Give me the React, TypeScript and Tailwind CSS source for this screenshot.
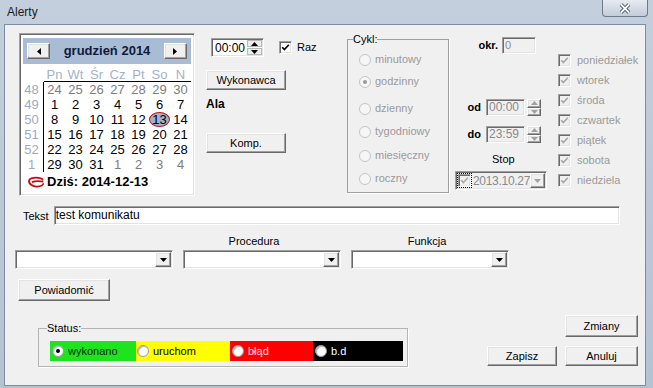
import React from "react";

const sunken =
  "border border-t-[#a0a0a0] border-l-[#a0a0a0] border-r-white border-b-white shadow-[inset_1px_1px_0_#696969,inset_-1px_-1px_0_#e3e3e3]";
const raised =
  "bg-[#f0f0f0] border border-t-white border-l-white border-r-[#696969] border-b-[#696969] shadow-[inset_-1px_-1px_0_#a0a0a0,inset_1px_1px_0_#e3e3e3]";

function Tri({ down = true, color = "#000" }: { down?: boolean; color?: string }) {
  return (
    <svg width="7" height="4" viewBox="0 0 7 4">
      <path d={down ? "M0 0h7L3.5 4z" : "M0 4h7L3.5 0z"} fill={color} />
    </svg>
  );
}

function Side({ left }: { left?: boolean }) {
  return (
    <svg width="4" height="7" viewBox="0 0 4 7">
      <path d={left ? "M4 0v7L0 3.5z" : "M0 0v7L4 3.5z"} fill="#000" />
    </svg>
  );
}

function Button({ label, className }: { label: string; className: string }) {
  return (
    <div className={`${raised} flex items-center justify-center text-[11px] leading-none ${className}`}>
      {label}
    </div>
  );
}

function Combo({ className }: { className: string }) {
  return (
    <div className={`${sunken} bg-white flex justify-end items-center pr-[1px] ${className}`}>
      <div className={`${raised} w-[16px] h-[15px] flex items-center justify-center`}>
        <Tri />
      </div>
    </div>
  );
}

function Check({ disabled }: { disabled?: boolean }) {
  return (
    <div
      className={`w-[13px] h-[13px] shrink-0 flex items-center justify-center ${sunken} ${
        disabled ? "bg-[#f0f0f0]" : "bg-white"
      }`}
    >
      <svg width="9" height="9" viewBox="0 0 9 9">
        <path
          d="M1.2 4.2 L3.4 6.6 L7.8 1.8"
          stroke={disabled ? "#a8a8a8" : "#000"}
          strokeWidth="1.7"
          fill="none"
        />
      </svg>
    </div>
  );
}

function Radio({ on, disabled }: { on?: boolean; disabled?: boolean }) {
  return (
    <div
      className={`w-[12px] h-[12px] shrink-0 rounded-full flex items-center justify-center border ${
        disabled
          ? "bg-[#f6f6f6] border-[#c4c4c4]"
          : "bg-white border-[#9a9a9a] shadow-[inset_1px_1px_1px_#b0b0b0]"
      }`}
    >
      {on && <div className={`w-[4px] h-[4px] rounded-full ${disabled ? "bg-[#9a9a9a]" : "bg-black"}`} />}
    </div>
  );
}

function Spin({ disabled }: { disabled?: boolean }) {
  const c = disabled ? "#a0a0a0" : "#000";
  return (
    <div className="w-[14px] h-[17px] flex flex-col">
      <div className={`${raised} flex-1 flex items-center justify-center`}>
        <Tri down={false} color={c} />
      </div>
      <div className={`${raised} flex-1 flex items-center justify-center`}>
        <Tri color={c} />
      </div>
    </div>
  );
}

const rows: [string, number[], number][] = [
  ["48", [24, 25, 26, 27, 28, 29, 30], 0],
  ["49", [1, 2, 3, 4, 5, 6, 7], 7],
  ["50", [8, 9, 10, 11, 12, 13, 14], 7],
  ["51", [15, 16, 17, 18, 19, 20, 21], 7],
  ["52", [22, 23, 24, 25, 26, 27, 28], 7],
  ["1", [29, 30, 31, 1, 2, 3, 4], 3],
];

function Calendar() {
  return (
    <div className={`ml-[14px] mt-[8px] w-[176px] h-[163px] bg-white ${sunken} flex flex-col`}>
      <div className="mx-[3px] mt-[4px] h-[26px] bg-[#a9bcd6] flex items-center justify-between px-[4px]">
        <div className={`${raised} w-[23px] h-[16px] flex items-center justify-center`}>
          <Side left />
        </div>
        <div className="text-[13px] font-bold text-[#111a3a]">grudzień 2014</div>
        <div className={`${raised} w-[23px] h-[16px] flex items-center justify-center`}>
          <Side />
        </div>
      </div>
      <div className="grid grid-cols-[24px_repeat(7,21px)] text-[13px] leading-[15px]">
        <div className="h-[18px]" />
        {["Pn", "Wt", "Śr", "Cz", "Pt", "So", "N"].map((d) => (
          <div key={d} className="h-[18px] pt-[3px] text-center text-[#a3b3c8] border-b border-black">
            {d}
          </div>
        ))}
        {rows.map(([wk, days, n], ri) => (
          <React.Fragment key={wk}>
            <div className="h-[15px] border-r border-black text-center text-[#9aabc2]">{wk}</div>
            {days.map((d, i) => {
              const muted = ri === 0 ? true : ri === 5 ? i >= n : false;
              const sel = ri === 2 && d === 13;
              return (
                <div key={i} className={`h-[15px] flex justify-center ${muted ? "text-[#7d7d7d]" : "text-black"}`}>
                  {sel ? (
                    <span className="w-[21px] h-[15px] rounded-[50%] border-[1.5px] border-[#cc1010] bg-[#9fb3cd] flex items-center justify-center">
                      13
                    </span>
                  ) : (
                    d
                  )}
                </div>
              );
            })}
          </React.Fragment>
        ))}
      </div>
      <div className="h-[20px] flex items-center pl-[7px] gap-[2px]">
        <svg width="18" height="12" viewBox="0 0 18 12">
          <path
            d="M16 4 C14 1, 4 0.8, 2.3 4 C0.8 7.5, 6 10.8, 10 10.6 C14 10.4, 16.6 9, 16.2 7.2 M5 6.2 C8 5, 12 5, 16.3 5.6"
            stroke="#c80c0c"
            strokeWidth="1.8"
            fill="none"
          />
        </svg>
        <span className="text-[13px] font-bold text-black">Dziś: 2014-12-13</span>
      </div>
    </div>
  );
}

const cykl: [string, number, boolean][] = [
  ["minutowy", 7, false],
  ["godzinny", 9, true],
  ["dzienny", 14, false],
  ["tygodniowy", 10, false],
  ["miesięczny", 11, false],
  ["roczny", 10, false],
];

const dni = ["poniedziałek", "wtorek", "środa", "czwartek", "piątek", "sobota", "niedziela"];

export default function App() {
  return (
    <div className="w-[653px] h-[388px] bg-gradient-to-b from-[#c3cfdc] to-[#b4c3d3] flex flex-col font-['Liberation_Sans',Arial,sans-serif] text-black overflow-hidden">
      <div className="h-[24px] flex items-start justify-between">
        <div className="pl-[7px] pt-[3px] text-[12px] text-[#1a1a1a]">Alerty</div>
        <div className="mr-[5px] w-[46px] h-[17px] rounded-b-[4px] border border-t-0 border-[#6c7a8c] bg-gradient-to-b from-[#e6ebf1] to-[#c3ccd8] flex items-center justify-center">
          <svg width="14" height="11" viewBox="0 0 14 11">
            <path d="M3 1.5 L11 9.5 M11 1.5 L3 9.5" stroke="#3c4655" strokeWidth="3.6" />
            <path d="M3 1.5 L11 9.5 M11 1.5 L3 9.5" stroke="#ffffff" strokeWidth="1.8" />
          </svg>
        </div>
      </div>

      <div className="ml-[4px] w-[642px] h-[362px] border border-[#7d8ca0] bg-[#f0f0f0] flex flex-col text-[11px]">
        {/* top area */}
        <div className="h-[181px] flex items-start">
          <Calendar />

          <div className="ml-[11px] w-[141px] flex flex-col items-start">
            <div className="mt-[13px] ml-[5px] flex items-center">
              <div className={`${sunken} bg-white w-[53px] h-[19px] flex items-center pl-[3px] pr-[1px] justify-between`}>
                <span className="text-[12px]">00:00</span>
                <div className="w-[15px] h-[15px] flex flex-col gap-[1px]">
                  <div className="flex-1 bg-[#ececec] border border-[#b8b8b8] flex items-center justify-center">
                    <Tri down={false} />
                  </div>
                  <div className="flex-1 bg-[#ececec] border border-[#b8b8b8] flex items-center justify-center">
                    <Tri />
                  </div>
                </div>
              </div>
              <div className="ml-[15px]">
                <Check />
              </div>
              <span className="ml-[5px] text-[11px]">Raz</span>
            </div>
            <Button label="Wykonawca" className="mt-[13px] w-[80px] h-[20px]" />
            <div className="mt-[7px] text-[12px] font-bold leading-[14px]">Ala</div>
            <Button label="Komp." className="mt-[22px] w-[80px] h-[20px]" />
          </div>

          <fieldset className="mt-[8px] w-[102px] h-[160px] border border-[#a0a0a0] shadow-[1px_1px_0_white] px-0">
            <legend className="ml-[5px] px-0 leading-[13px] text-[11px]">Cykl:</legend>
            <div className="flex flex-col pl-[11px]">
              {cykl.map(([name, mt, on]) => (
                <div key={name} className="flex items-center h-[13px]" style={{ marginTop: mt }}>
                  <Radio on={on} disabled />
                  <span className="ml-[4px] text-[#9a9a9a]">{name}</span>
                </div>
              ))}
            </div>
          </fieldset>

          <div className="w-[97px] flex flex-col">
            <div className="mt-[12px] flex items-center justify-end pr-[10px] gap-[4px]">
              <span className="font-bold text-[11px]">okr.</span>
              <div className={`${sunken} bg-[#f0f0f0] w-[34px] h-[17px] pl-[2px] text-[#8a8a8a] leading-[15px]`}>0</div>
            </div>
            <div className="mt-[45px] flex items-center justify-end pr-[5px]">
              <span className="font-bold text-[11px] mr-[5px]">od</span>
              <div className={`${sunken} bg-[#f0f0f0] w-[39px] h-[17px] pl-[2px] text-[#8a8a8a] text-[12px] leading-[15px]`}>00:00</div>
              <div className="ml-[2px]">
                <Spin disabled />
              </div>
            </div>
            <div className="mt-[10px] flex items-center justify-end pr-[5px]">
              <span className="font-bold text-[11px] mr-[5px]">do</span>
              <div className={`${sunken} bg-[#f0f0f0] w-[39px] h-[17px] pl-[2px] text-[#8a8a8a] text-[12px] leading-[15px]`}>23:59</div>
              <div className="ml-[2px]">
                <Spin disabled />
              </div>
            </div>
            <div className="mt-[9px] pl-[43px] text-[11px] leading-[14px]">Stop</div>
            <div className={`mt-[5px] ml-[6px] w-[92px] h-[19px] ${sunken} bg-[#f0f0f0] flex items-center pl-[1px] pr-[1px]`}>
              <div className="border border-dotted border-black">
                <Check disabled />
              </div>
              <span className="ml-[1px] text-[12px] tracking-[-0.3px] text-[#8a8a8a]">2013.10.27</span>
              <div className={`${raised} ml-auto w-[15px] h-[15px] flex items-center justify-center`}>
                <Tri color="#a0a0a0" />
              </div>
            </div>
          </div>

          <div className="ml-[12px] mt-[25px] flex flex-col">
            {dni.map((d) => (
              <div key={d} className="h-[20px] flex items-center">
                <Check disabled />
                <span className="ml-[6px] text-[#9a9a9a]">{d}</span>
              </div>
            ))}
          </div>
        </div>

        {/* Tekst */}
        <div className="h-[19px] flex items-center">
          <span className="ml-[18px] text-[11px] mt-[2px]">Tekst</span>
          <div className={`${sunken} bg-white ml-[5px] w-[566px] h-[19px] pl-[1px] text-[12px] leading-[17px]`}>
            test komunikatu
          </div>
        </div>

        {/* labels */}
        <div className="h-[25px] pt-[10px] flex gap-[10px] pl-[10px] leading-[13px] text-[11px]">
          <div className="w-[158px]" />
          <div className="w-[158px] text-center pr-[16px]">Procedura</div>
          <div className="w-[158px] text-center pr-[6px]">Funkcja</div>
        </div>

        {/* combos */}
        <div className="h-[19px] flex gap-[10px] pl-[10px]">
          <Combo className="w-[158px] h-[19px]" />
          <Combo className="w-[158px] h-[19px]" />
          <Combo className="w-[158px] h-[19px]" />
        </div>

        <Button label="Powiadomić" className="mt-[10px] ml-[13px] w-[92px] h-[22px]" />

        {/* bottom */}
        <div className="flex items-start">
          <fieldset className="mt-[21px] ml-[33px] w-[370px] h-[45px] border border-[#b4b4b4] shadow-[1px_1px_0_white] px-0">
            <legend className="ml-[8px] px-0 leading-[13px] text-[11px]">Status:</legend>
            <div className="mt-[6px] ml-[11px] h-[20px] flex text-[11px]">
              <div className="w-[86px] bg-[#1ee41e] flex items-center pl-[2px]">
                <Radio on />
                <span className="ml-[4px] text-[#0c2a0c]">wykonano</span>
              </div>
              <div className="w-[94px] bg-[#ffff00] flex items-center pl-[1px]">
                <Radio />
                <span className="ml-[4px]">uruchom</span>
              </div>
              <div className="w-[83px] bg-[#ff0000] flex items-center pl-[2px]">
                <Radio />
                <span className="ml-[4px] text-[#ffe4e4]">błąd</span>
              </div>
              <div className="w-[90px] bg-black flex items-center pl-[2px]">
                <Radio />
                <span className="ml-[4px] text-white">b.d</span>
              </div>
            </div>
          </fieldset>

          <div className="ml-auto mr-[7px] mt-[14px] flex flex-col items-end">
            <Button label="Zmiany" className="w-[73px] h-[22px]" />
            <div className="mt-[9px] flex gap-[8px]">
              <Button label="Zapisz" className="w-[70px] h-[20px]" />
              <Button label="Anuluj" className="w-[73px] h-[20px]" />
            </div>
          </div>
        </div>
      </div>
    </div>
  );
}
